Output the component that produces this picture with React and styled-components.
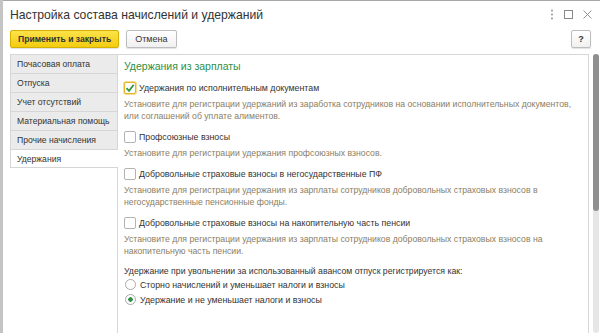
import styled, { createGlobalStyle } from "styled-components";

const GlobalStyle = createGlobalStyle`
  html, body {
    margin: 0;
    padding: 0;
  }
  body {
    font-family: "Liberation Sans", Arial, sans-serif;
    color: #333;
  }
`;

const tabs = [
  "Почасовая оплата",
  "Отпуска",
  "Учет отсутствий",
  "Материальная помощь",
  "Прочие начисления",
  "Удержания",
];

const items = [
  {
    title: "Удержания по исполнительным документам",
    checked: true,
    text: [
      "Установите для регистрации удержаний из заработка сотрудников на основании исполнительных документов,",
      "или соглашений об уплате алиментов.",
    ],
  },
  {
    title: "Профсоюзные взносы",
    text: ["Установите для регистрации удержания профсоюзных взносов."],
  },
  {
    title: "Добровольные страховые взносы в негосударственные ПФ",
    text: [
      "Установите для регистрации удержания из зарплаты сотрудников добровольных страховых взносов в",
      "негосударственные пенсионные фонды.",
    ],
  },
  {
    title: "Добровольные страховые взносы на накопительную часть пенсии",
    text: [
      "Установите для регистрации удержания из зарплаты сотрудников добровольных страховых взносов на",
      "накопительную часть пенсии.",
    ],
  },
];

const App = () => {
  return (
    <Screen>
      <GlobalStyle />
      <Window>
        <TitleBar>
          <Title>Настройка состава начислений и удержаний</Title>
          <WindowIcons>
            <svg width="4" height="11" viewBox="0 0 4 11">
              <circle cx="2" cy="1.5" r="0.9" fill="#888" />
              <circle cx="2" cy="5.5" r="0.9" fill="#888" />
              <circle cx="2" cy="9.5" r="0.9" fill="#888" />
            </svg>
            <svg width="9" height="9" viewBox="0 0 9 9">
              <rect x="0.5" y="0.5" width="8" height="8" fill="none" stroke="#888" />
            </svg>
            <svg width="9" height="9" viewBox="0 0 9 9">
              <path d="M0.5 0.5 L8.5 8.5 M8.5 0.5 L0.5 8.5" stroke="#888" strokeWidth="0.9" />
            </svg>
          </WindowIcons>
        </TitleBar>

        <Toolbar>
          <Button primary>Применить и закрыть</Button>
          <Button>Отмена</Button>
          <Spacer />
          <HelpButton>?</HelpButton>
        </Toolbar>

        <Body>
          <TabList>
            {tabs.map((tab, i) => (
              <Tab key={tab} active={i === tabs.length - 1}>
                {tab}
              </Tab>
            ))}
            <TabFiller />
          </TabList>

          <Panel>
            <Heading>Удержания из зарплаты</Heading>
            {items.map((item) => (
              <Item key={item.title}>
                <CheckRow>
                  <Checkbox focused={item.checked}>
                    {item.checked && (
                      <svg width="10" height="10" viewBox="0 0 10 10">
                        <path
                          d="M1.5 5.2 L4 7.8 L8.7 1.8"
                          fill="none"
                          stroke="#2f9a3f"
                          strokeWidth="1.8"
                        />
                      </svg>
                    )}
                  </Checkbox>
                  <Label>{item.title}</Label>
                </CheckRow>
                <Description>
                  {item.text.map((line) => (
                    <div key={line}>{line}</div>
                  ))}
                </Description>
              </Item>
            ))}

            <Question>
              Удержание при увольнении за использованный авансом отпуск
              регистрируется как:
            </Question>
            <RadioRow>
              <Radio />
              <Label>Сторно начислений и уменьшает налоги и взносы</Label>
            </RadioRow>
            <RadioRow>
              <Radio selected />
              <Label>Удержание и не уменьшает налоги и взносы</Label>
            </RadioRow>
          </Panel>

          <Scrollbar>
            <Thumb />
          </Scrollbar>
        </Body>
      </Window>
    </Screen>
  );
};

export default App;

const Screen = styled.div`
  width: 600px;
  height: 333px;
  overflow: hidden;
  display: flex;
  background: #c4c4c4;
  padding-left: 3px;
  box-sizing: border-box;
`;

const Window = styled.div`
  flex: 1;
  display: flex;
  flex-direction: column;
  background: #fff;
  border-top: 1px solid #a8a8a8;
`;

const TitleBar = styled.div`
  height: 27px;
  display: flex;
  align-items: center;
  padding: 0 8px 0 7px;
`;

const Title = styled.div`
  flex: 1;
  font-size: 12.2px;
  color: #333;
`;

const WindowIcons = styled.div`
  display: flex;
  align-items: center;
  gap: 10px;
`;

const Toolbar = styled.div`
  display: flex;
  align-items: center;
  gap: 7px;
  margin-top: 2px;
  padding: 0 9px 0 7px;
  height: 18px;
`;

const Button = styled.button`
  height: 18px;
  padding: 0 ${(p) => (p.primary ? "7px" : "8px")};
  font-family: inherit;
  font-size: ${(p) => (p.primary ? "8.6px" : "9px")};
  font-weight: ${(p) => (p.primary ? "bold" : "normal")};
  color: #333;
  border-radius: 2px;
  border: 1px solid ${(p) => (p.primary ? "#d4b100" : "#bdbdbd")};
  background: ${(p) =>
    p.primary
      ? "linear-gradient(#fde34a, #f3cc0f)"
      : "linear-gradient(#ffffff, #f0f0f0)"};
  box-shadow: 0 1px 1px rgba(0, 0, 0, 0.12);
`;

const Spacer = styled.div`
  flex: 1;
`;

const HelpButton = styled(Button)`
  width: 20px;
  padding: 0;
  font-weight: bold;
`;

const Body = styled.div`
  flex: 1;
  display: flex;
  margin-top: 6px;
  padding-left: 7px;
  min-height: 0;
`;

const TabList = styled.div`
  width: 108px;
  display: flex;
  flex-direction: column;
`;

const Tab = styled.div`
  height: 19px;
  box-sizing: border-box;
  display: flex;
  align-items: center;
  padding-left: 6px;
  font-size: 8.6px;
  white-space: nowrap;
  color: #333;
  background: ${(p) => (p.active ? "#fff" : "#ebebeb")};
  border-top: 1px solid #d6d6d6;
  border-left: 1px solid #d6d6d6;
  border-right: ${(p) => (p.active ? "none" : "1px solid #d6d6d6")};
  border-bottom: ${(p) => (p.active ? "1px solid #d6d6d6" : "none")};
`;

const TabFiller = styled.div`
  flex: 1;
  border-right: 1px solid #d6d6d6;
`;

const Panel = styled.div`
  flex: 1;
  border-top: 1px solid #d6d6d6;
  border-right: 1px solid #d6d6d6;
  padding: 5px 6px 0 6px;
  overflow: hidden;
`;

const Heading = styled.div`
  height: 12px;
  line-height: 12px;
  font-size: 10.5px;
  color: #2f8f46;
  margin-bottom: 8px;
`;

const Item = styled.div`
  margin-bottom: 7px;
`;

const CheckRow = styled.div`
  height: 16px;
  display: flex;
  align-items: center;
  gap: 3px;
`;

const Checkbox = styled.span`
  width: 12px;
  height: 12px;
  box-sizing: border-box;
  display: flex;
  align-items: center;
  justify-content: center;
  border-radius: 2px;
  background: #fff;
  border: 1px solid ${(p) => (p.focused ? "#e7b52c" : "#b3b3b3")};
  box-shadow: ${(p) => (p.focused ? "0 0 0 1px #f6dc8c" : "none")};
`;

const Label = styled.span`
  font-size: 8.8px;
  color: #333;
  white-space: nowrap;
`;

const Description = styled.div`
  margin-top: 2px;
  font-size: 8.7px;
  line-height: 12px;
  color: #8a7e64;
  white-space: nowrap;
`;

const Question = styled.div`
  margin-top: 8px;
  height: 12px;
  line-height: 12px;
  font-size: 8.7px;
  color: #333;
  white-space: nowrap;
`;

const RadioRow = styled.div`
  height: 15px;
  display: flex;
  align-items: center;
  gap: 4px;
  padding-left: 1px;
`;

const Radio = styled.span`
  width: 11px;
  height: 11px;
  box-sizing: border-box;
  border-radius: 50%;
  border: 1px solid #a9a9a9;
  background: ${(p) =>
    p.selected
      ? "radial-gradient(circle, #2f8f46 0 2px, #fff 2.5px)"
      : "#fff"};
`;

const Scrollbar = styled.div`
  width: 6px;
  margin-left: 4px;
  margin-right: 1px;
  background: #e6e6e6;
  border-radius: 3px;
`;

const Thumb = styled.div`
  height: 157px;
  background: #8f8f8f;
  border-radius: 3px;
`;
